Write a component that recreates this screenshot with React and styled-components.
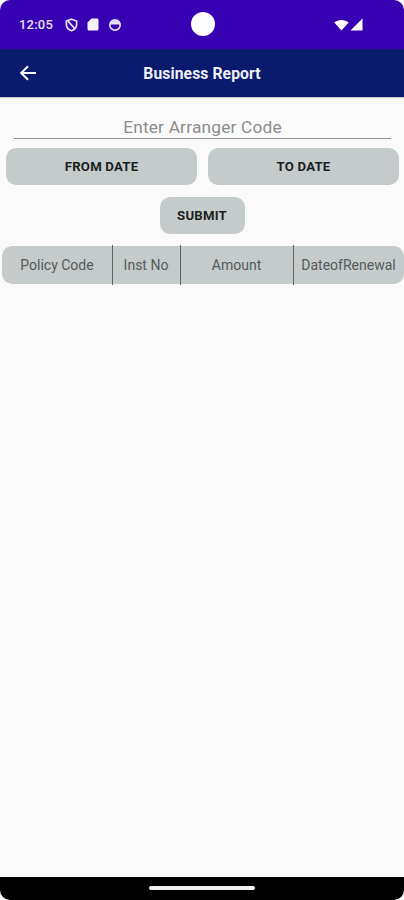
import React from 'react';
import styled, { createGlobalStyle } from 'styled-components';

const GlobalStyle = createGlobalStyle`
    html, body {
        margin: 0;
        padding: 0;
        background: #fff;
    }
    * {
        box-sizing: border-box;
    }
`;

const Screen = styled.div`
    width: 404px;
    height: 900px;
    display: flex;
    flex-direction: column;
    overflow: hidden;
    border-radius: 10px;
    background-color: #fafafa;
    font-family: Roboto, "Liberation Sans", sans-serif;
`;

const StatusBar = styled.div`
    height: 49px;
    flex-shrink: 0;
    display: grid;
    grid-template-columns: 1fr 26px 1fr;
    align-items: center;
    padding: 0 19px;
    background-color: #3700b3;
    color: #e6e0f6;
`;

const StatusLeft = styled.div`
    display: flex;
    align-items: center;
    gap: 9px;
`;

const Clock = styled.span`
    font-size: 13px;
    font-weight: 500;
    letter-spacing: 0.2px;
    margin-right: 3px;
`;

const Camera = styled.div`
    width: 24px;
    height: 24px;
    margin: 0 0 2px 2px;
    border-radius: 50%;
    background-color: #fff;
`;

const StatusRight = styled.div`
    display: flex;
    justify-content: flex-end;
    align-items: center;
    gap: 1px;
    padding-right: 22px;
`;

const Toolbar = styled.div`
    height: 48px;
    flex-shrink: 0;
    display: grid;
    grid-template-columns: 1fr auto 1fr;
    align-items: center;
    padding: 0 19px;
    background-color: #0a1a6c;
    box-shadow: 0 1px 1px rgba(0, 0, 0, 0.2);
    color: #eef0f8;
`;

const Title = styled.h1`
    margin: 0;
    font-size: 15.7px;
    font-weight: 700;
    letter-spacing: 0.1px;
`;

const Content = styled.div`
    flex: 1;
    display: flex;
    flex-direction: column;
    padding-top: 20px;
`;

const CodeField = styled.div`
    height: 22px;
    margin: 0 13px 0 14px;
    border-bottom: 1px solid #8e8e8e;
    color: #8c8c8c;
    font-size: 17.3px;
    line-height: 20px;
    letter-spacing: 0.2px;
    text-align: center;
`;

const DateRow = styled.div`
    display: grid;
    grid-template-columns: 191px 191px;
    gap: 11px;
    margin: 9px 0 0 6px;
`;

const ActionButton = styled.button`
    height: 37px;
    padding: 0;
    border: none;
    border-radius: 10px;
    background-color: #c5cbcb;
    color: #1c1f1f;
    font-family: inherit;
    font-size: 13.2px;
    font-weight: 700;
    letter-spacing: 0.2px;
`;

const SubmitButton = styled(ActionButton)`
    align-self: center;
    width: 85px;
    margin-top: 12px;
`;

const TableHead = styled.div`
    display: grid;
    grid-template-columns: 110px 68px 113px 1fr;
    height: 38px;
    margin: 12px 0 0 2px;
    border-radius: 10px;
    background-color: #c5cbcb;
`;

const HeadCell = styled.div`
    display: flex;
    align-items: center;
    justify-content: center;
    position: relative;
    color: #555a5a;
    font-size: 14px;
    white-space: nowrap;
    &:not(:last-child)::after {
        content: '';
        position: absolute;
        top: -1px;
        right: -1px;
        bottom: -1px;
        width: 1px;
        background-color: #5c6262;
    }
`;

const NavBar = styled.div`
    height: 23px;
    flex-shrink: 0;
    display: flex;
    justify-content: center;
    padding-top: 9px;
    background-color: #000;
`;

const HomePill = styled.div`
    width: 106px;
    height: 4px;
    border-radius: 2px;
    background-color: #f2f2f2;
`;

function ShieldIcon() {
    return (
        <svg width="13" height="14" viewBox="0 0 13 14" fill="none" stroke="#e6e0f6" strokeWidth="1.7">
            <path d="M6.5 1.2 L11.6 3 V6.6 C11.6 9.6 9.4 11.9 6.5 12.8 C3.6 11.9 1.4 9.6 1.4 6.6 V3 Z" />
            <path d="M3 3.2 L10 10.8" />
        </svg>
    );
}

function SimIcon() {
    return (
        <svg width="12" height="13" viewBox="0 0 12 13">
            <path d="M4.5 0.5 H10 C10.8 0.5 11.5 1.2 11.5 2 V11 C11.5 11.8 10.8 12.5 10 12.5 H2 C1.2 12.5 0.5 11.8 0.5 11 V4.5 Z" fill="#f4f1fb" />
        </svg>
    );
}

function SyncIcon() {
    return (
        <svg width="14" height="14" viewBox="0 0 14 14" fill="none">
            <circle cx="7" cy="7" r="5.2" stroke="#e6e0f6" strokeWidth="1.7" />
            <path d="M2 6.6 C2.6 1.4 11.4 1.4 12 6.6 Z" fill="#e6e0f6" />
        </svg>
    );
}

function WifiIcon() {
    return (
        <svg width="15" height="12" viewBox="0 0 15 12">
            <path d="M0.3 3.6 C3.8 0.2 11.2 0.2 14.7 3.6 L7.5 11.6 Z" fill="#fff" />
        </svg>
    );
}

function SignalIcon() {
    return (
        <svg width="13" height="13" viewBox="0 0 13 13">
            <path d="M12.5 0.5 V12.5 H0.5 Z" fill="#fff" />
        </svg>
    );
}

function BackArrow() {
    return (
        <svg width="18" height="16" viewBox="0 0 18 16" fill="none" stroke="#f4f5fb" strokeWidth="2.1">
            <path d="M17 8 H2.5" />
            <path d="M9 1.2 L2.2 8 L9 14.8" />
        </svg>
    );
}

const columns = ['Policy Code', 'Inst No', 'Amount', 'DateofRenewal'];

export default function App() {
    return (
        <Screen>
            <GlobalStyle />
            <StatusBar>
                <StatusLeft>
                    <Clock>12:05</Clock>
                    <ShieldIcon />
                    <SimIcon />
                    <SyncIcon />
                </StatusLeft>
                <Camera />
                <StatusRight>
                    <WifiIcon />
                    <SignalIcon />
                </StatusRight>
            </StatusBar>
            <Toolbar>
                <BackArrow />
                <Title>Business Report</Title>
            </Toolbar>
            <Content>
                <CodeField>Enter Arranger Code</CodeField>
                <DateRow>
                    <ActionButton>FROM DATE</ActionButton>
                    <ActionButton>TO DATE</ActionButton>
                </DateRow>
                <SubmitButton>SUBMIT</SubmitButton>
                <TableHead>
                    {columns.map((name) => (
                        <HeadCell key={name}>{name}</HeadCell>
                    ))}
                </TableHead>
            </Content>
            <NavBar>
                <HomePill />
            </NavBar>
        </Screen>
    );
}
